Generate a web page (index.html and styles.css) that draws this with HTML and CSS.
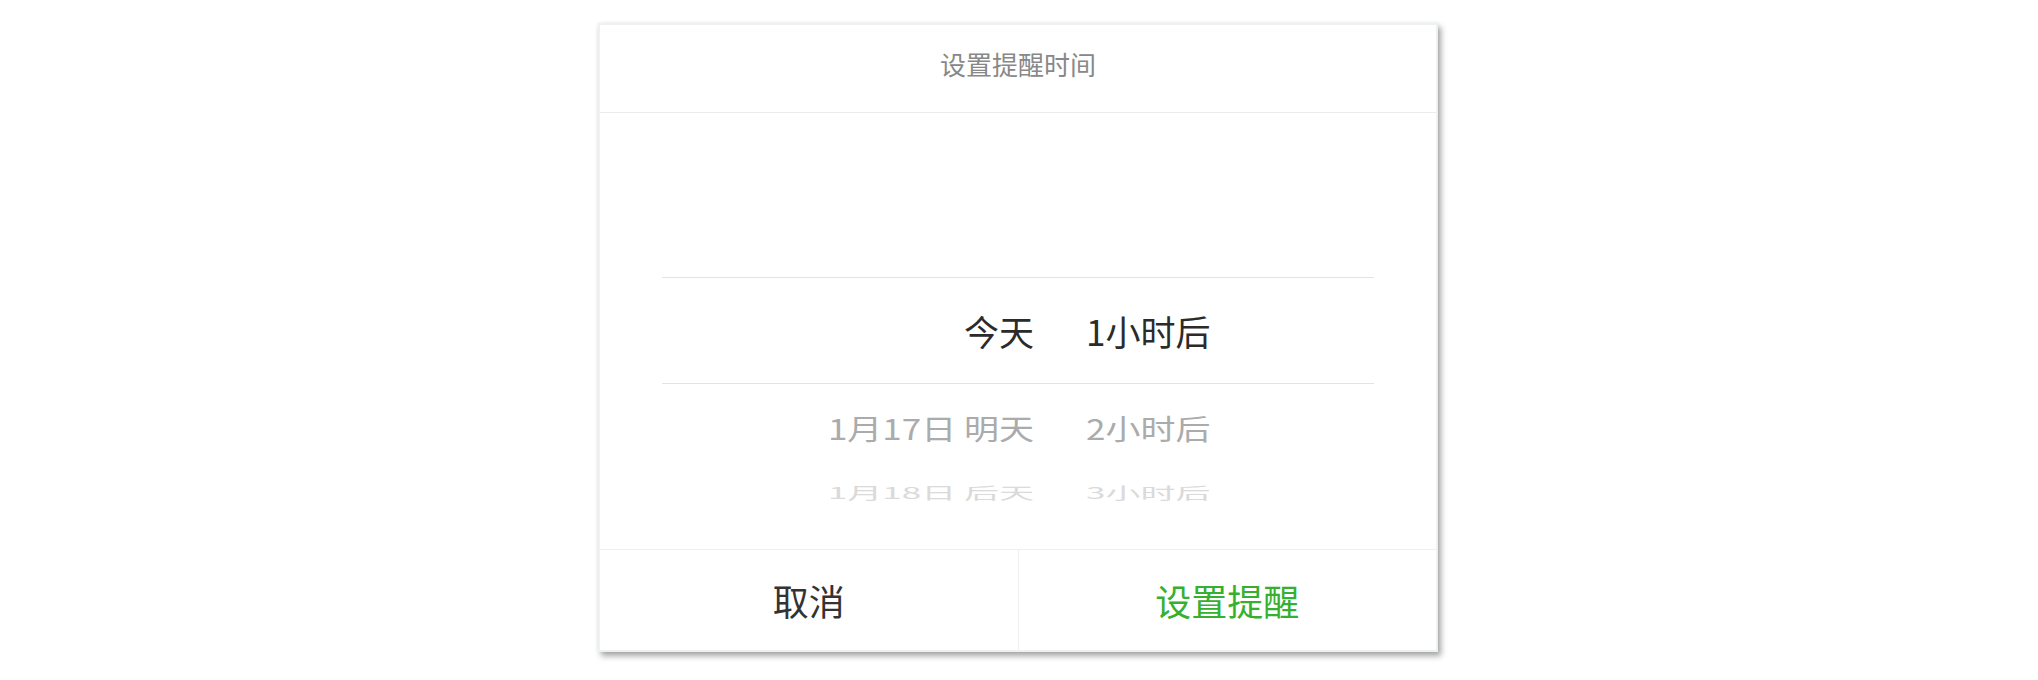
FILE: index.html
```html
<!DOCTYPE html>
<html lang="zh-CN">
<head>
<meta charset="utf-8">
<title>设置提醒时间</title>
<link rel="stylesheet" href="styles.css">
</head>
<body>
<div class="dialog">
  <div class="dialog-header">设置提醒时间</div>
  <div class="dialog-body">
    <div class="wheel">
      <div class="row row-selected">
        <span class="col-date">今天</span>
        <span class="col-time">1小时后</span>
      </div>
      <div class="row row-next">
        <span class="col-date">1月17日 明天</span>
        <span class="col-time">2小时后</span>
      </div>
      <div class="row row-far">
        <span class="col-date">1月18日 后天</span>
        <span class="col-time">3小时后</span>
      </div>
    </div>
  </div>
  <div class="dialog-footer">
    <div class="btn btn-cancel">取消</div>
    <div class="btn btn-confirm">设置提醒</div>
  </div>
</div>
</body>
</html>
```

FILE: styles.css
```css
html, body {
  margin: 0;
  padding: 0;
  background: #ffffff;
}

body {
  font-family: "Noto Sans CJK SC", "Noto Sans", sans-serif;
  width: 2038px;
  height: 680px;
  overflow: hidden;
}

.dialog {
  box-sizing: border-box;
  width: 840px;
  height: 629px;
  margin: 23px 0 0 598px;
  background: #ffffff;
  border: 2px solid #edf1f1;
  box-shadow: 3px 4px 6px rgba(0, 0, 0, 0.35), 0 0 4px rgba(0, 0, 0, 0.06);
  display: flex;
  flex-direction: column;
}

.dialog-header {
  height: 88px;
  box-sizing: border-box;
  padding-top: 21px;
  border-bottom: 1px solid #ebebeb;
  text-align: center;
  font-size: 26px;
  line-height: 36px;
  color: #888888;
}

.dialog-body {
  flex: 1;
  padding: 0 62px;
  overflow: hidden;
}

.wheel {
  margin-top: 164px;
}

.row {
  display: grid;
  grid-template-columns: 372px 290px;
  column-gap: 52px;
  align-items: center;
  font-size: 35px;
  white-space: nowrap;
}

.col-date {
  text-align: right;
}

.col-time {
  text-align: left;
}

.row-selected {
  height: 105px;
  border-top: 1px solid #e3e3e3;
  border-bottom: 1px solid #e3e3e3;
  color: #2b2b2b;
}

.row-next {
  height: 86px;
  color: #ababab;
  transform: scaleY(0.82);
}

.row-far {
  height: 40px;
  color: #dadada;
  transform: scaleY(0.45);
}

.dialog-footer {
  height: 100px;
  display: flex;
  border-top: 1px solid #f0f0f0;
}

.btn {
  flex: 1;
  display: flex;
  align-items: center;
  justify-content: center;
  font-size: 36px;
}

.btn-cancel {
  color: #333333;
  border-right: 1px solid #f0f0f0;
}

.btn-confirm {
  color: #36b02e;
}
```
